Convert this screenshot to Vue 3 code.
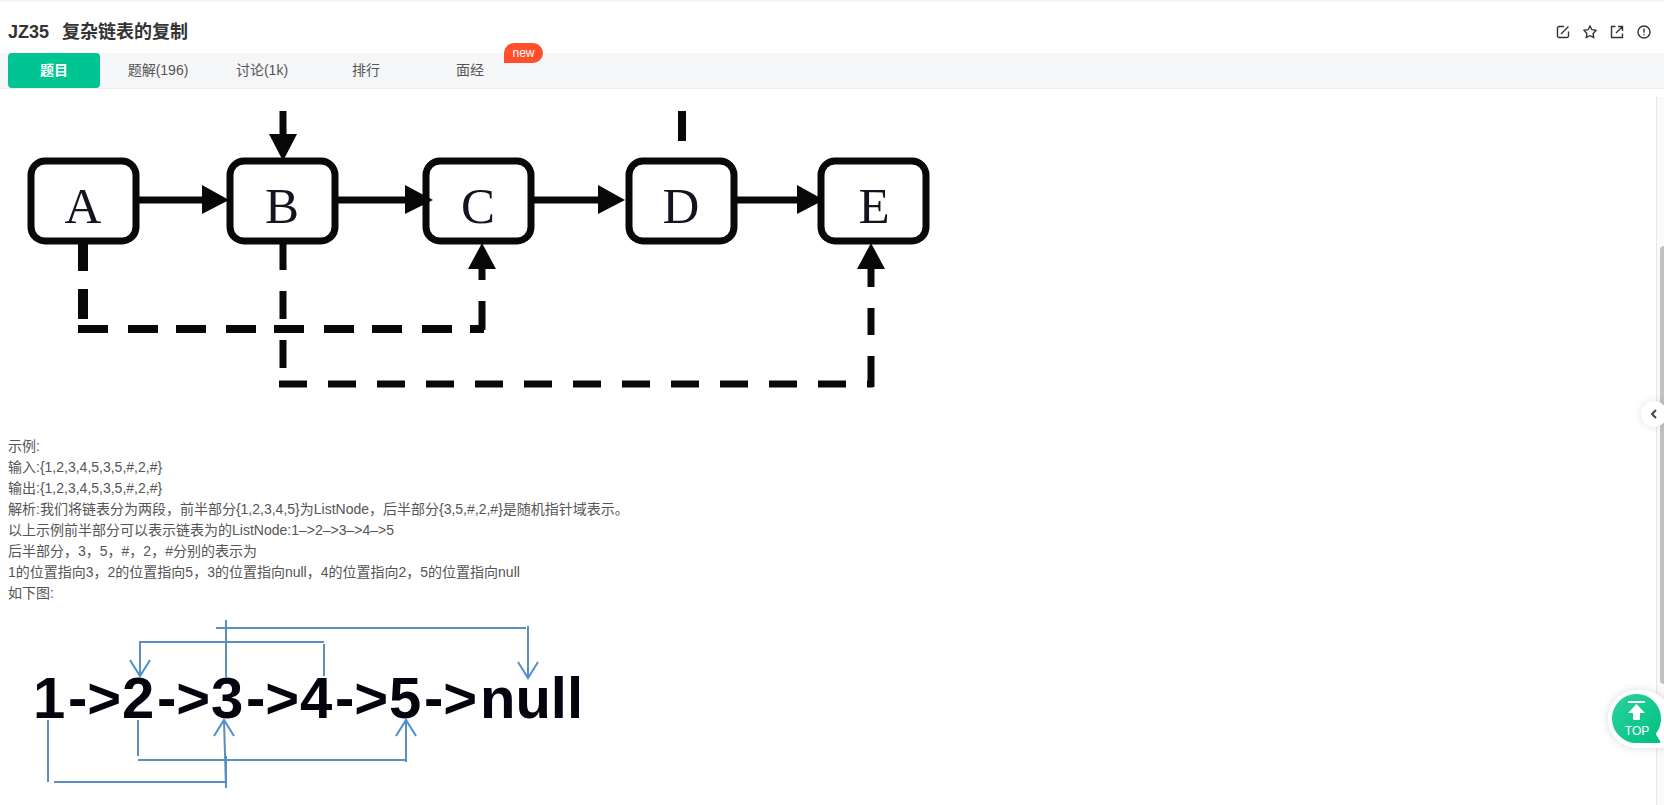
<script setup>
import { ref } from 'vue'

const tabs = ['题目', '题解(196)', '讨论(1k)', '排行', '面经']
const active = ref(0)

const boxes = [
  { name: 'A', x: 31, cx: 83 },
  { name: 'B', x: 230, cx: 282 },
  { name: 'C', x: 426, cx: 478 },
  { name: 'D', x: 629, cx: 681 },
  { name: 'E', x: 821, cx: 874 }
]

const lines = [
  '示例:',
  '输入:{1,2,3,4,5,3,5,#,2,#}',
  '输出:{1,2,3,4,5,3,5,#,2,#}',
  '解析:我们将链表分为两段，前半部分{1,2,3,4,5}为ListNode，后半部分{3,5,#,2,#}是随机指针域表示。',
  '以上示例前半部分可以表示链表为的ListNode:1–>2–>3–>4–>5',
  '后半部分，3，5，#，2，#分别的表示为',
  '1的位置指向3，2的位置指向5，3的位置指向null，4的位置指向2，5的位置指向null',
  '如下图:'
]

const chain = [1, 2, 3, 4, 5].map((n, i) => ({ n, x: 33 + 89 * i, ax: 68 + 89 * i }))
</script>

<template>
  <div class="page">
    <header class="head">
      <h1 class="title"><span>JZ35</span><span>复杂链表的复制</span></h1>
      <div class="actions">
        <button type="button" aria-label="编辑">
          <svg viewBox="0 0 14 14"><path d="M8 1.5H3A1.5 1.5 0 0 0 1.500 3V11A1.500 1.500 0 0 0 3 12.500H11A1.500 1.500 0 0 0 12.500 11V6.500M5 9L12.500 1.500" /></svg>
        </button>
        <button type="button" aria-label="收藏">
          <svg viewBox="0 0 14 14"><path d="M7 1L8.900 4.700L13 5.400L10.100 8.400L10.700 12.500L7 10.700L3.300 12.500L3.900 8.400L1 5.400L5.100 4.700Z" /></svg>
        </button>
        <button type="button" aria-label="分享">
          <svg viewBox="0 0 14 14"><path d="M5.500 1.500H1.500V12.500H12.500V8.500M8 1.500H12.500V6M12.500 1.500L6 8" /></svg>
        </button>
        <button type="button" aria-label="反馈">
          <svg viewBox="0 0 14 14"><circle cx="7" cy="7" r="6" /><path d="M7 3.500V7.800M7 9.200V10.600" /></svg>
        </button>
      </div>
    </header>

    <nav class="tabs">
      <button
        v-for="(t, i) in tabs"
        :key="t"
        type="button"
        class="tab"
        :class="{ active: active === i }"
        @click="active = i"
      >{{ t }}<span v-if="i === 4" class="badge">new</span></button>
    </nav>

    <main class="body">
      <article class="content">
        <svg class="figure" width="952" height="339" viewBox="8 97 952 339" role="img" aria-label="复杂链表">
          <g class="box">
            <rect v-for="b in boxes" :key="b.name" :x="b.x" y="161" width="105" height="80" rx="14" />
          </g>
          <g class="letters">
            <text v-for="b in boxes" :key="b.name" :x="b.cx" y="223">{{ b.name }}</text>
          </g>
          <g class="solid">
            <path d="M138 200H206M338 200H410M534 200H602M737 200H802M283 111V138" />
          </g>
          <g class="heads">
            <path d="M202 185V214L229 200Z" />
            <path d="M405 185V214L433 200Z" />
            <path d="M598 185V214L625 200Z" />
            <path d="M797 185V214L824 200Z" />
            <path d="M269 134H297L283 161Z" />
            <path d="M468 269H496L482 243Z" />
            <path d="M857 269H885L871 243Z" />
          </g>
          <path class="dash w10" d="M83 243V271M83 289V319" />
          <path class="dash w8" d="M682 111V141M78 329H108M128 329H158M176 329H206M226 329H256M274 329H304M324 329H354M372 329H402M422 329H452M470 329H484" />
          <path class="dash w7" d="M482 267V280M482 301V330M283 243V270M283 291V319M283 340V368M871 267V287M871 308V335M871 356V387" />
          <path class="dash w7" d="M279 384H307M328 384H356M377 384H405M426 384H454M475 384H503M524 384H552M573 384H601M622 384H650M671 384H699M720 384H748M769 384H797M818 384H846M867 384H873" />
        </svg>

        <p v-for="(l, i) in lines" :key="i" class="line">{{ l }}</p>

        <svg class="figure" width="592" height="200" viewBox="8 604 592 200" role="img" aria-label="链表示例">
          <text class="chain" y="718"><template v-for="c in chain" :key="c.n"><tspan :x="c.x">{{ c.n }}</tspan><tspan :x="c.ax">-&gt;</tspan></template><tspan x="480">null</tspan></text>
          <g class="links">
            <path d="M48 720V782M54 782H226M226 788L224 720M226 788V756" />
            <path d="M138 720V756M138 760H406M406 762V720" />
            <path d="M140 676V642H324M324 644V676" />
            <path d="M226 620V677M216 628H526M528 626V678" />
          </g>
          <g class="tips">
            <path d="M214 736L224 720L234 736M396 736L406 720L416 736M130 660L140 676L150 660M518 662L528 678L538 662" />
          </g>
        </svg>
      </article>
      <div class="track"><div class="thumb"></div></div>
    </main>

    <button type="button" class="collapse" aria-label="收起">
      <svg viewBox="0 0 10 10"><path d="M7 1L3 5L7 9" /></svg>
    </button>

    <button type="button" class="top">
      <svg class="bubble" viewBox="0 0 60 60" aria-hidden="true">
        <defs>
          <linearGradient id="topFill" x1="0" y1="0" x2="1" y2="1">
            <stop offset="0" stop-color="#2ad39a" />
            <stop offset="1" stop-color="#00bf84" />
          </linearGradient>
        </defs>
        <path class="halo" d="M30 1A29 29 0 0 0 30 59H60V16A29 29 0 0 0 30 1Z" />
        <path fill="url(#topFill)" d="M29.500 5A24.500 24.500 0 1 0 29.500 54H52Q54 54 53 52L50 47Q48 45 50 43Q54 37 54 29.500A24.500 24.500 0 0 0 29.500 5Z" />
        <path fill="#fff" d="M21 12H38V14H21ZM29.500 15L38 24H33V30Q33 31 32 31H27Q26 31 26 30V24H21Z" />
      </svg>
      <span class="top-label">TOP</span>
    </button>
  </div>
</template>

<style>
body {
  margin: 0;
  background: #fff;
}
</style>

<style scoped>
.page {
  position: relative;
  display: flex;
  flex-direction: column;
  height: 100vh;
  overflow: hidden;
  box-sizing: border-box;
  border-top: 2px solid #f5f5f6;
  font-family: "Liberation Sans", "Noto Sans CJK SC", sans-serif;
  font-size: 14px;
  color: #555;
}
button {
  border: 0;
  padding: 0;
  margin: 0;
  background: none;
  font: inherit;
  color: inherit;
  cursor: pointer;
}
.head {
  display: flex;
  align-items: center;
  justify-content: space-between;
  height: 51px;
  padding: 8px 13px 0 8px;
  box-sizing: border-box;
  flex: none;
}
.title {
  display: flex;
  gap: 13px;
  margin: 0;
  font-size: 18px;
  line-height: 26px;
  font-weight: 700;
  color: #333;
}
.actions {
  display: flex;
  gap: 13px;
}
.actions button {
  width: 14px;
  height: 14px;
}
.actions svg {
  display: block;
  width: 14px;
  height: 14px;
  fill: none;
  stroke: #333;
  stroke-width: 1.4;
}
.tabs {
  display: flex;
  gap: 12px;
  flex: none;
  padding-left: 8px;
  background: #f5f6f8;
  border-bottom: 1px solid #eaebed;
}
.tab {
  position: relative;
  width: 92px;
  height: 35px;
  line-height: 35px;
  border-radius: 4px;
  text-align: center;
}
.tab.active {
  background: #00c491;
  color: #fff;
  font-weight: 700;
}
.badge {
  position: absolute;
  left: 80px;
  top: -10px;
  width: 39px;
  height: 20px;
  line-height: 20px;
  border-radius: 10px 10px 10px 0;
  background: #ff4f2b;
  color: #fff;
  font-size: 12px;
}
.body {
  display: flex;
  flex: 1;
  min-height: 0;
  margin-top: 8px;
}
.content {
  flex: 1;
  min-width: 0;
  overflow: hidden;
  padding-left: 8px;
}
.figure {
  display: block;
}
.line {
  margin: 0;
  line-height: 21px;
}
.box rect {
  fill: #fff;
  stroke: #080808;
  stroke-width: 7;
}
.letters text {
  font-family: "Liberation Serif", serif;
  font-size: 51px;
  text-anchor: middle;
  fill: #141420;
}
.solid path,
.dash {
  fill: none;
  stroke: #080808;
  stroke-width: 7;
}
.heads path {
  fill: #080808;
}
.dash.w10 {
  stroke-width: 10;
}
.dash.w8 {
  stroke-width: 8;
}
.chain {
  font-size: 58px;
  font-weight: 700;
  fill: #04040e;
}
.links path,
.tips path {
  fill: none;
  stroke: #5a8fc0;
  stroke-width: 2;
}
.tips path {
  stroke: #4f90cc;
}
.track {
  position: relative;
  width: 7px;
  flex: none;
  overflow: hidden;
  background: #fafafa;
  border-left: 1px solid #e6e6e6;
}
.thumb {
  position: absolute;
  top: 149px;
  left: 3px;
  width: 8px;
  height: 438px;
  border-radius: 4px;
  background: #c1c1c1;
}
.collapse {
  position: absolute;
  right: -3px;
  top: 399px;
  width: 26px;
  height: 26px;
  border-radius: 50%;
  background: #fff;
  box-shadow: 0 0 8px rgba(0, 0, 0, 0.12);
}
.collapse svg {
  display: block;
  width: 10px;
  height: 10px;
  margin: 0 auto;
  fill: none;
  stroke: #444;
  stroke-width: 2;
}
.top {
  position: absolute;
  right: -3px;
  bottom: 56px;
  width: 60px;
  height: 60px;
}
.bubble {
  display: block;
  width: 60px;
  height: 60px;
  overflow: visible;
}
.halo {
  fill: #fff;
  filter: drop-shadow(0 0 4px rgba(0, 0, 0, 0.14));
}
.top-label {
  position: absolute;
  left: 0;
  right: 0;
  top: 35px;
  font-size: 12px;
  line-height: 14px;
  color: #fff;
  text-align: center;
}
</style>
